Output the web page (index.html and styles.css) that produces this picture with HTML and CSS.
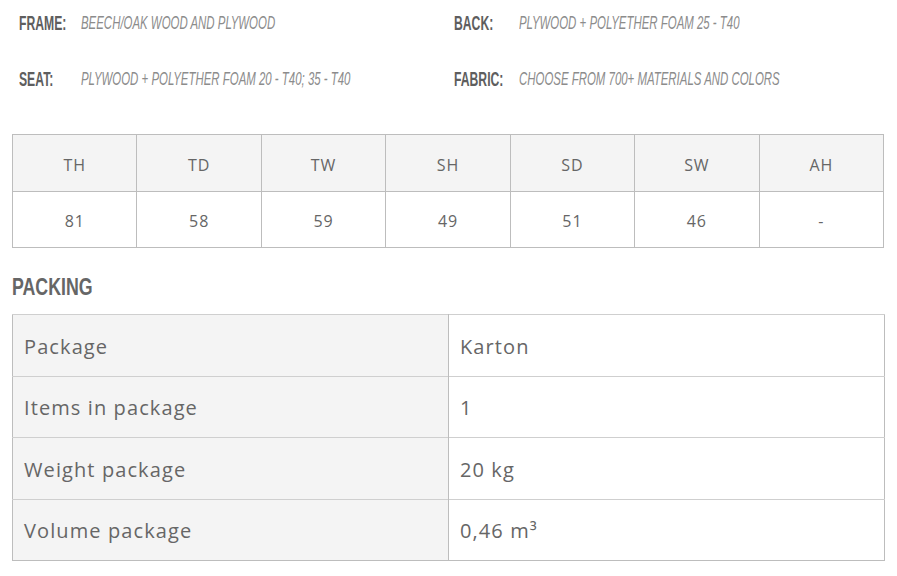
FILE: index.html
```html
<!DOCTYPE html>
<html lang="en">
<head>
<meta charset="utf-8">
<title>Specs</title>
<link rel="stylesheet" href="styles.css">
</head>
<body>
<div class="page">
  <div class="specs">
    <div class="spec-label"><span class="cond">FRAME:</span></div>
    <div class="spec-value"><span class="cond-i">BEECH/OAK WOOD AND PLYWOOD</span></div>
    <div class="spec-label"><span class="cond">BACK:</span></div>
    <div class="spec-value"><span class="cond-i">PLYWOOD + POLYETHER FOAM 25 - T40</span></div>
    <div class="spec-label"><span class="cond">SEAT:</span></div>
    <div class="spec-value"><span class="cond-i">PLYWOOD + POLYETHER FOAM 20 - T40; 35 - T40</span></div>
    <div class="spec-label"><span class="cond">FABRIC:</span></div>
    <div class="spec-value"><span class="cond-i">CHOOSE FROM 700+ MATERIALS AND COLORS</span></div>
  </div>

  <table class="dims">
    <tr class="dims-head">
      <td>TH</td><td>TD</td><td>TW</td><td>SH</td><td>SD</td><td>SW</td><td>AH</td>
    </tr>
    <tr class="dims-body">
      <td>81</td><td>58</td><td>59</td><td>49</td><td>51</td><td>46</td><td>-</td>
    </tr>
  </table>

  <h2 class="section-title"><span class="cond-h">PACKING</span></h2>

  <table class="packing">
    <tr><td class="pk-key">Package</td><td class="pk-val">Karton</td></tr>
    <tr><td class="pk-key">Items in package</td><td class="pk-val">1</td></tr>
    <tr><td class="pk-key">Weight package</td><td class="pk-val">20 kg</td></tr>
    <tr><td class="pk-key">Volume package</td><td class="pk-val">0,46 m³</td></tr>
  </table>
</div>
</body>
</html>
```

FILE: styles.css
```css
html, body {
  margin: 0;
  padding: 0;
  background: #ffffff;
}

.page {
  padding: 0 12px;
  font-family: "Open Sans", "Liberation Sans", sans-serif;
  color: #666666;
}

.specs {
  display: grid;
  grid-template-columns: 62px 373px 65px 1fr;
  grid-auto-rows: 56px;
  padding-left: 7px;
  margin-top: -5px;
  align-items: center;
}

.spec-label,
.spec-value {
  white-space: nowrap;
  overflow: visible;
}

.cond {
  display: inline-block;
  font-family: "Liberation Sans", sans-serif;
  font-weight: bold;
  font-size: 21px;
  color: #5e5e5e;
  transform: scaleX(0.58);
  transform-origin: left center;
}

.cond-i {
  display: inline-block;
  font-family: "Liberation Sans", sans-serif;
  font-style: italic;
  font-size: 18px;
  color: #8c8c8c;
  transform: scaleX(0.635);
  transform-origin: left center;
}

.dims {
  width: 872px;
  margin-top: 27px;
  border-collapse: collapse;
  table-layout: fixed;
  font-size: 16px;
  letter-spacing: 0.9px;
}

.dims td {
  border: 1px solid #bdbdbd;
  text-align: center;
  color: #666666;
  padding: 3px 0 0 0;
}

.dims-head td {
  background: #f4f4f4;
  height: 53px;
}

.dims-body td {
  background: #ffffff;
  height: 52px;
}

.section-title {
  margin: 23px 0 0 0;
  height: 43px;
  line-height: 30px;
  font-weight: normal;
}

.cond-h {
  display: inline-block;
  font-family: "Liberation Sans", sans-serif;
  font-weight: bold;
  font-size: 24px;
  color: #666666;
  transform: scaleX(0.74);
  transform-origin: left center;
}

.packing {
  width: 873px;
  border-collapse: collapse;
  table-layout: fixed;
  font-size: 20px;
  letter-spacing: 1.1px;
  border: 1px solid #bdbdbd;
}

.packing td {
  height: 58.5px;
  padding: 2px 0 0 11px;
  border-top: 1px solid #cfcfcf;
  color: #666666;
}

.pk-key {
  background: #f4f4f4;
  border-right: 1px solid #bdbdbd;
  width: 424px;
}

.pk-val {
  background: #ffffff;
}
```
